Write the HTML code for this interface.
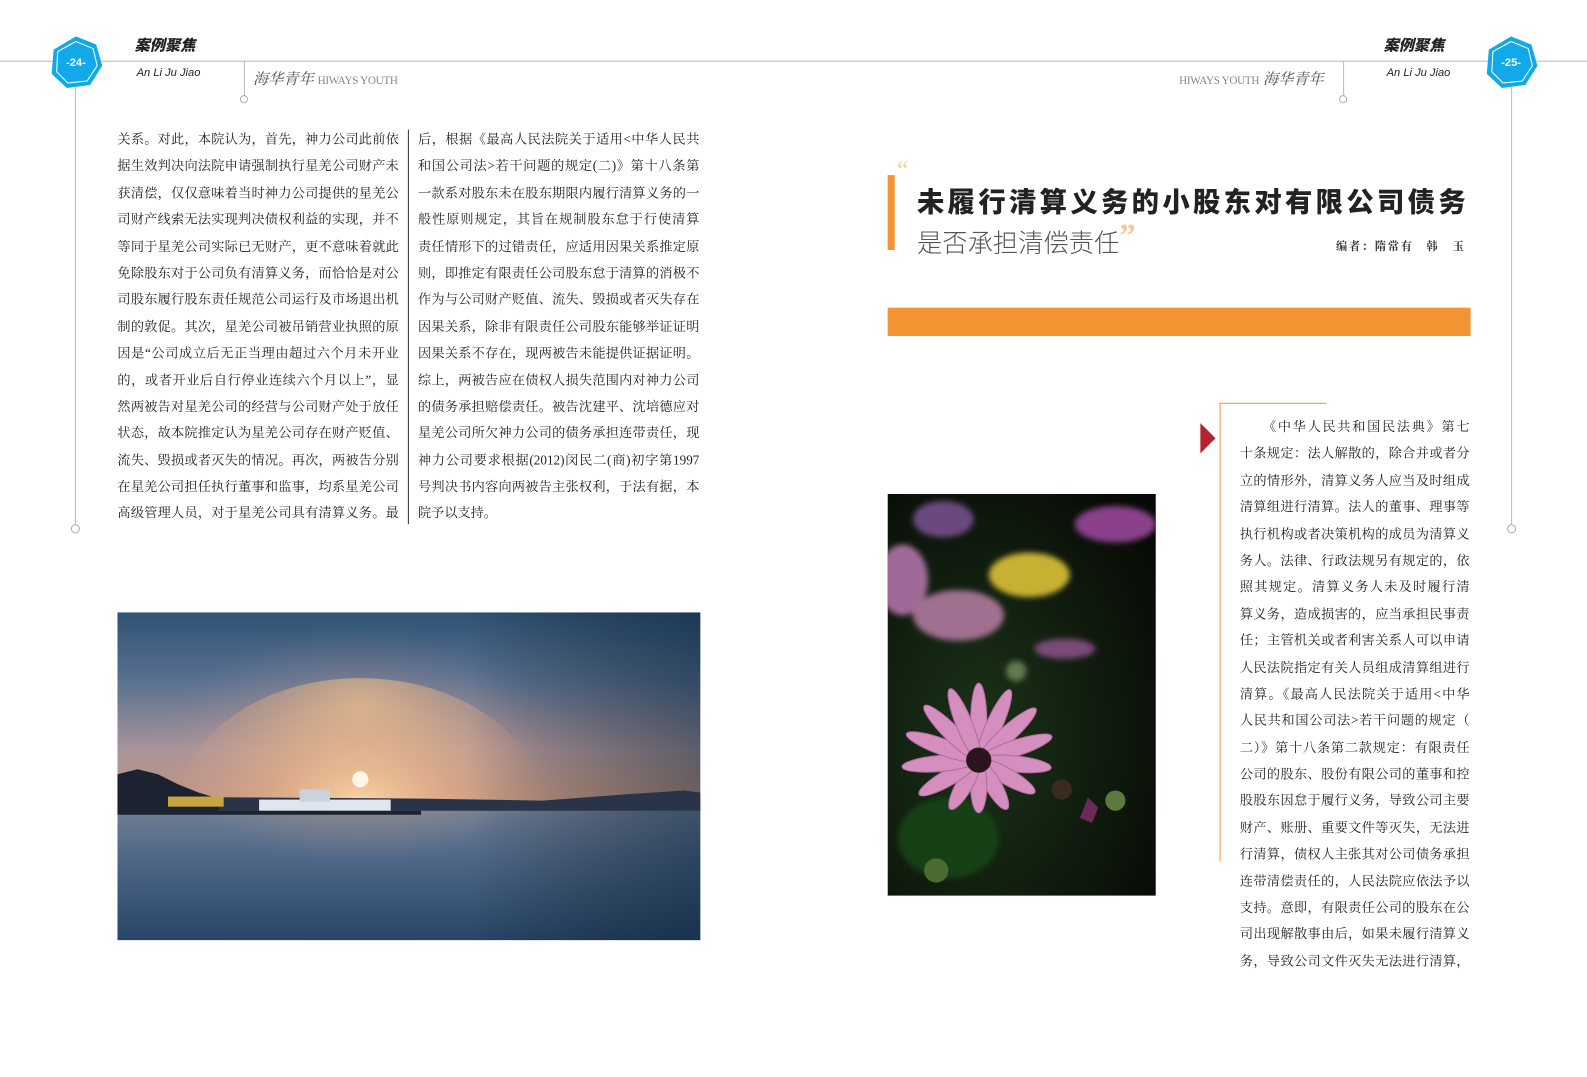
<!DOCTYPE html><html><head><meta charset="utf-8"><style>
body{margin:0;width:1587px;height:1077px;background:#fff;position:relative;overflow:hidden;font-family:"Liberation Serif","Noto Serif CJK SC",serif;}
#w{position:absolute;left:0;top:0;width:1568px;height:1064px;transform:scale(1.01212);transform-origin:0 0}
.a{position:absolute}
.col div{height:26.4px;line-height:26.4px;font-size:13px;color:#222;text-align:justify;text-align-last:justify;white-space:nowrap;}
.col div.l{text-align-last:left}
</style></head><body><div id="w">
<div class="a" style="left:0;top:60px;width:1568px;height:1px;background:#bbb"></div>
<div class="a" style="left:74px;top:60px;width:1px;height:460px;background:#bbb"></div>
<div class="a" style="left:70px;top:518px;width:7px;height:7px;border:1px solid #aaa;border-radius:50%;background:#fff"></div>
<div class="a" style="left:1493px;top:60px;width:1px;height:460px;background:#bbb"></div>
<div class="a" style="left:1489px;top:518px;width:7px;height:7px;border:1px solid #aaa;border-radius:50%;background:#fff"></div>
<div class="a" style="left:241px;top:60px;width:1px;height:36px;background:#bbb"></div>
<div class="a" style="left:237px;top:94px;width:6px;height:6px;border:1px solid #aaa;border-radius:50%;background:#fff"></div>
<div class="a" style="left:1327px;top:60px;width:1px;height:36px;background:#bbb"></div>
<div class="a" style="left:1323px;top:94px;width:6px;height:6px;border:1px solid #aaa;border-radius:50%;background:#fff"></div>
<svg class="a" style="left:48px;top:35px" width="54" height="54" viewBox="0 0 54 54"><polygon points="27,1 47,9 53,30 41,49 18,52 3,38 5,14" fill="#12a9e8"/><polygon points="27,6 44,13 48,30 38,45 19,47 8,36 9,16" fill="none" stroke="#fff" stroke-width="1"/><text x="27" y="30" font-size="11" fill="#fff" text-anchor="middle" font-family="Liberation Sans" font-weight="bold">-24-</text></svg>
<svg class="a" style="left:1466px;top:35px" width="54" height="54" viewBox="0 0 54 54"><polygon points="27,1 47,9 53,30 41,49 18,52 3,38 5,14" fill="#12a9e8"/><polygon points="27,6 44,13 48,30 38,45 19,47 8,36 9,16" fill="none" stroke="#fff" stroke-width="1"/><text x="27" y="30" font-size="11" fill="#fff" text-anchor="middle" font-family="Liberation Sans" font-weight="bold">-25-</text></svg>
<div class="a" style="left:133px;top:34px;font:900 15px 'Noto Sans CJK SC',sans-serif;font-style:italic;color:#222">案例聚焦</div>
<div class="a" style="left:135px;top:66px;font:italic 11px 'Liberation Sans',sans-serif;color:#222">An Li Ju Jiao</div>
<div class="a" style="left:1367px;top:34px;font:900 15px 'Noto Sans CJK SC',sans-serif;font-style:italic;color:#222">案例聚焦</div>
<div class="a" style="left:1370px;top:66px;font:italic 11px 'Liberation Sans',sans-serif;color:#222">An Li Ju Jiao</div>
<div class="a" style="left:250px;top:67px;font:italic 15px 'Noto Serif CJK SC',serif;color:#555;white-space:nowrap">海华青年 <span style="font:11px 'Liberation Serif';color:#888;letter-spacing:-.3px">HIWAYS YOUTH</span></div>
<div class="a" style="left:1165px;top:67px;font:italic 15px 'Noto Serif CJK SC',serif;color:#555;white-space:nowrap"><span style="font:11px 'Liberation Serif';color:#888;letter-spacing:-.3px">HIWAYS YOUTH</span> 海华青年</div>
<div class="a" style="left:403px;top:128px;width:1px;height:390px;background:#333"></div>
<div class="a col" style="left:116px;top:125px;width:278px">
<div>关系。对此，本院认为，首先，神力公司此前依</div><div>据生效判决向法院申请强制执行星羌公司财产未</div><div>获清偿，仅仅意味着当时神力公司提供的星羌公</div><div>司财产线索无法实现判决债权利益的实现，并不</div><div>等同于星羌公司实际已无财产，更不意味着就此</div><div>免除股东对于公司负有清算义务，而恰恰是对公</div><div>司股东履行股东责任规范公司运行及市场退出机</div><div>制的敦促。其次，星羌公司被吊销营业执照的原</div><div>因是“公司成立后无正当理由超过六个月未开业</div><div>的，或者开业后自行停业连续六个月以上”，显</div><div>然两被告对星羌公司的经营与公司财产处于放任</div><div>状态，故本院推定认为星羌公司存在财产贬值、</div><div>流失、毁损或者灭失的情况。再次，两被告分别</div><div>在星羌公司担任执行董事和监事，均系星羌公司</div><div>高级管理人员，对于星羌公司具有清算义务。最</div></div>
<div class="a col" style="left:413px;top:125px;width:278px">
<div>后，根据《最高人民法院关于适用&lt;中华人民共</div><div>和国公司法&gt;若干问题的规定(二)》第十八条第</div><div>一款系对股东未在股东期限内履行清算义务的一</div><div>般性原则规定，其旨在规制股东怠于行使清算</div><div>责任情形下的过错责任，应适用因果关系推定原</div><div>则，即推定有限责任公司股东怠于清算的消极不</div><div>作为与公司财产贬值、流失、毁损或者灭失存在</div><div>因果关系，除非有限责任公司股东能够举证证明</div><div>因果关系不存在，现两被告未能提供证据证明。</div><div>综上，两被告应在债权人损失范围内对神力公司</div><div>的债务承担赔偿责任。被告沈建平、沈培德应对</div><div>星羌公司所欠神力公司的债务承担连带责任，现</div><div>神力公司要求根据(2012)闵民二(商)初字第1997</div><div>号判决书内容向两被告主张权利，于法有据，本</div><div class="l">院予以支持。</div></div>
<svg class="a" style="left:116px;top:605px" width="576" height="324" viewBox="0 0 576 324">
<defs>
<linearGradient id="sky" x1="0" y1="0" x2="0" y2="1"><stop offset="0" stop-color="#2f5275"/><stop offset=".35" stop-color="#5a7190"/><stop offset=".7" stop-color="#a8949a"/><stop offset="1" stop-color="#c8977c"/></linearGradient>
<radialGradient id="sun" cx=".5" cy=".55" r=".5"><stop offset="0" stop-color="#fff4da"/><stop offset=".08" stop-color="#fbd7a8"/><stop offset=".4" stop-color="#e9b08a" stop-opacity=".55"/><stop offset=".75" stop-color="#c89a90" stop-opacity=".2"/><stop offset="1" stop-color="#a08898" stop-opacity="0"/></radialGradient>
<linearGradient id="water" x1="0" y1="0" x2="0" y2="1"><stop offset="0" stop-color="#6f7f95"/><stop offset=".4" stop-color="#4e6686"/><stop offset="1" stop-color="#284668"/></linearGradient>
<radialGradient id="refl" cx=".5" cy=".1" r=".6"><stop offset="0" stop-color="#f0c08c" stop-opacity=".7"/><stop offset="1" stop-color="#d9a07f" stop-opacity="0"/></radialGradient>
<linearGradient id="dark" x1="0" y1="0" x2="1" y2="0"><stop offset="0" stop-color="#000" stop-opacity="0"/><stop offset=".6" stop-color="#000" stop-opacity="0"/><stop offset="1" stop-color="#021a30" stop-opacity=".45"/></linearGradient>
</defs>
<rect width="576" height="195" fill="url(#sky)"/>
<ellipse cx="240" cy="175" rx="230" ry="180" fill="url(#sun)"/>
<rect y="194" width="576" height="130" fill="url(#water)"/>
<ellipse cx="240" cy="195" rx="180" ry="130" fill="url(#refl)"/>
<rect width="576" height="324" fill="url(#dark)"/>
<path d="M0,182 L300,184 L420,186 L500,180 L560,176 L576,178 L576,196 L0,196Z" fill="#2a3448"/>
<path d="M0,160 L20,155 L40,160 L60,170 L80,178 L100,184 L100,198 L0,198Z" fill="#1c2230"/>
<rect x="50" y="182" width="55" height="10" fill="#c9a440"/>
<rect x="140" y="185" width="130" height="12" fill="#dfe6ee"/>
<rect x="180" y="175" width="30" height="12" fill="#c9d2de"/>
<rect x="0" y="196" width="300" height="4" fill="#1c2230"/>
<circle cx="240" cy="165" r="8" fill="#fff7e6"/>
</svg>
<svg class="a" style="left:877px;top:488px" width="265" height="397" viewBox="0 0 265 397">
<defs><radialGradient id="bg" cx=".35" cy=".6" r=".8"><stop offset="0" stop-color="#1b3318"/><stop offset=".6" stop-color="#0f1a0d"/><stop offset="1" stop-color="#070a06"/></radialGradient>
<filter id="bl"><feGaussianBlur stdDeviation="3"/></filter></defs>
<rect width="265" height="397" fill="url(#bg)"/>
<g filter="url(#bl)">
<ellipse cx="55" cy="25" rx="30" ry="18" fill="#6a4a80"/>
<ellipse cx="225" cy="30" rx="40" ry="18" fill="#8a3f8a"/>
<ellipse cx="140" cy="80" rx="40" ry="22" fill="#c8b030"/>
<ellipse cx="15" cy="85" rx="25" ry="35" fill="#a06a98"/>
<ellipse cx="70" cy="120" rx="45" ry="25" fill="#a07090"/>
<ellipse cx="175" cy="153" rx="30" ry="10" fill="#7a4a78"/>
<circle cx="127" cy="175" r="10" fill="#607a50"/>
<ellipse cx="60" cy="340" rx="50" ry="40" fill="#174018"/>
</g>
<g fill="#d48fbf" stroke="#b46a9f" stroke-width="1">
<g transform="translate(90,263)">
<ellipse rx="8" ry="38" transform="rotate(0) translate(0,-38)"/>
<ellipse rx="8" ry="38" transform="rotate(24) translate(0,-38)"/>
<ellipse rx="8" ry="38" transform="rotate(48) translate(0,-38)"/>
<ellipse rx="8" ry="38" transform="rotate(72) translate(0,-38)"/>
<ellipse rx="8" ry="36" transform="rotate(96) translate(0,-36)"/>
<ellipse rx="8" ry="32" transform="rotate(120) translate(0,-32)"/>
<ellipse rx="8" ry="28" transform="rotate(150) translate(0,-28)"/>
<ellipse rx="8" ry="26" transform="rotate(180) translate(0,-26)"/>
<ellipse rx="8" ry="28" transform="rotate(210) translate(0,-28)"/>
<ellipse rx="8" ry="34" transform="rotate(240) translate(0,-34)"/>
<ellipse rx="8" ry="38" transform="rotate(265) translate(0,-38)"/>
<ellipse rx="8" ry="38" transform="rotate(290) translate(0,-38)"/>
<ellipse rx="8" ry="38" transform="rotate(315) translate(0,-38)"/>
<ellipse rx="8" ry="38" transform="rotate(338) translate(0,-38)"/>
<circle r="12" fill="#2a1420" stroke="#3a2010"/>
</g></g>
<circle cx="172" cy="292" r="10" fill="#3a2a20"/>
<path d="M190,320 l8,-20 l10,10 l-6,15z" fill="#6a2a5a"/>
<circle cx="225" cy="303" r="10" fill="#5a7a40"/>
<circle cx="48" cy="372" r="12" fill="#4a6a30"/>
</svg>
<div class="a" style="left:877px;top:173px;width:7px;height:74px;background:#f39433"></div>
<div class="a" style="left:886px;top:154px;font:26px 'Liberation Serif';color:#f5cfa0">“</div>
<div class="a" style="left:906px;top:178px;font:900 27px 'Noto Sans CJK SC',sans-serif;color:#222;white-space:nowrap;letter-spacing:3.3px">未履行清算义务的小股东对有限公司债务</div>
<div class="a" style="left:906px;top:220px;font:300 25px 'Noto Sans CJK SC',sans-serif;color:#555;white-space:nowrap">是否承担清偿责任<span style="color:#f5c896;font:bold 32px 'Liberation Serif';position:relative;top:-6px">”</span></div>
<div class="a" style="left:1320px;top:235px;font:bold 11px 'Noto Serif CJK SC',serif;color:#333;white-space:nowrap;letter-spacing:1.8px">编者：隋常有　韩　玉</div>
<div class="a" style="left:877px;top:304px;width:576px;height:28px;background:#f39433"></div>
<div class="a" style="left:1205px;top:398px;width:1px;height:453px;background:#f39433"></div>
<div class="a" style="left:1205px;top:398px;width:106px;height:1px;background:#f39433"></div>
<div class="a" style="left:1186px;top:418px;width:0;height:0;border-top:15px solid transparent;border-bottom:15px solid transparent;border-left:15px solid #b5222d"></div>
<div class="a col" style="left:1225px;top:409px;width:227px">
<div>　　《中华人民共和国民法典》第七</div><div>十条规定：法人解散的，除合并或者分</div><div>立的情形外，清算义务人应当及时组成</div><div>清算组进行清算。法人的董事、理事等</div><div>执行机构或者决策机构的成员为清算义</div><div>务人。法律、行政法规另有规定的，依</div><div>照其规定。清算义务人未及时履行清</div><div>算义务，造成损害的，应当承担民事责</div><div>任；主管机关或者利害关系人可以申请</div><div>人民法院指定有关人员组成清算组进行</div><div>清算。《最高人民法院关于适用&lt;中华</div><div>人民共和国公司法&gt;若干问题的规定（</div><div>二）》第十八条第二款规定：有限责任</div><div>公司的股东、股份有限公司的董事和控</div><div>股股东因怠于履行义务，导致公司主要</div><div>财产、账册、重要文件等灭失，无法进</div><div>行清算，债权人主张其对公司债务承担</div><div>连带清偿责任的，人民法院应依法予以</div><div>支持。意即，有限责任公司的股东在公</div><div>司出现解散事由后，如果未履行清算义</div><div>务，导致公司文件灭失无法进行清算，</div></div>
</div></body></html>
